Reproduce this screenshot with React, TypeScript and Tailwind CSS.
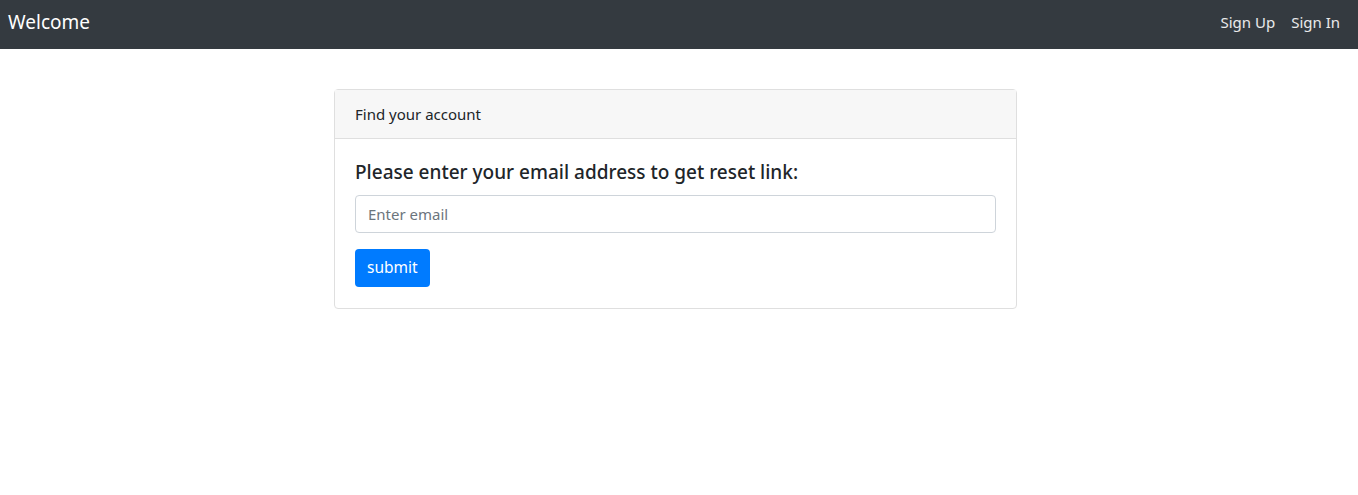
export default function App() {
  return (
    <div className="min-h-screen bg-white text-[#212529] font-['Noto_Sans',sans-serif]">
      <nav className="flex h-[49px] items-center justify-between bg-[#343a40] pb-[5px] pl-2 pr-[10px]">
        <a href="#" className="text-[19px] leading-[30px] text-white">
          Welcome
        </a>
        <div className="flex">
          <a href="#" className="px-2 text-[15px] text-white/90">
            Sign Up
          </a>
          <a href="#" className="px-2 text-[15px] text-white/90">
            Sign In
          </a>
        </div>
      </nav>

      <div className="ml-[334px] mt-[40px] w-[683px] rounded border border-[#dfdfdf]">
        <div className="h-[49px] border-b border-[#dfdfdf] bg-[#f7f7f7] px-5 pt-[13px] text-[15px]">
          Find your account
        </div>
        <div className="px-5 pt-[21px] pb-[21px]">
          <h5 className="mb-[11px] text-[19px] font-medium leading-6">
            Please enter your email address to get reset link:
          </h5>
          <input
            type="email"
            placeholder="Enter email"
            className="h-[38px] w-full rounded border border-[#ced4da] px-3 text-[15px] placeholder:text-[#6c757d]"
          />
          <button className="mt-4 h-[38px] rounded bg-[#007bff] px-3 text-[15.5px] text-white">
            submit
          </button>
        </div>
      </div>
    </div>
  );
}
